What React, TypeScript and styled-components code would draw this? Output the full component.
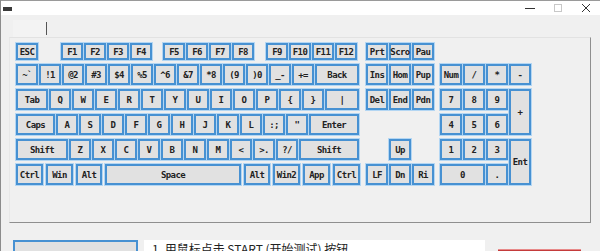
import React from "react";
import styled, { createGlobalStyle } from "styled-components";

const GlobalStyle = createGlobalStyle`
  html, body {
    margin: 0;
    padding: 0;
    background: #f0f0f0;
  }
  body {
    font-family: "Noto Sans CJK SC", "Noto Sans", sans-serif;
    overflow: hidden;
  }
`;

const Window = styled.div`
  width: 600px;
  height: 251px;
  overflow: hidden;
  box-sizing: border-box;
  background: #f0f0f0;
  border-left: 1px solid #8c8c8c;
  display: flex;
  flex-direction: column;
`;

const TitleBar = styled.div`
  height: 15px;
  flex: none;
  background: #ffffff;
  border-top: 1px solid #9a9a9a;
  box-sizing: border-box;
  display: flex;
  align-items: center;
`;

const AppIcon = styled.div`
  width: 9px;
  height: 4px;
  margin-left: 2px;
  margin-top: 2px;
  background: #3a3a3a;
`;

const Controls = styled.div`
  margin-left: auto;
  display: flex;
`;

const CtrlButton = styled.div<{ $dim?: boolean }>`
  width: 28px;
  height: 14px;
  display: flex;
  align-items: center;
  justify-content: center;
  color: ${(p) => (p.$dim ? "#c8c8c8" : "#333")};
`;

const TopStrip = styled.div`
  height: 22px;
  flex: none;
  display: flex;
  align-items: flex-start;
`;

const FieldBox = styled.div`
  margin-left: 12px;
  margin-top: 5px;
  width: 33px;
  height: 17px;
  background: #f3f3f3;
`;

const Caret = styled.div`
  width: 1px;
  height: 13px;
  margin-top: 7px;
  background: #555;
`;

const Panel = styled.div`
  margin-left: 8px;
  width: 582px;
  height: 186px;
  flex: none;
  box-sizing: border-box;
  border-top: 1px solid #e2e2e2;
  border-left: 1px solid #e8e8e8;
  border-right: 1px solid #8f8f8f;
  border-bottom: 1px solid #8f8f8f;
  padding: 5px 0 0 6px;
  display: flex;
  align-items: flex-start;
`;

const Block = styled.div<{ $gapLeft?: number }>`
  display: flex;
  flex-direction: column;
  gap: 4px;
  margin-left: ${(p) => p.$gapLeft ?? 0}px;
`;

const Row = styled.div<{ $gap?: number }>`
  display: flex;
  gap: ${(p) => p.$gap ?? 1}px;
`;

const Key = styled.div<{ $w?: number; $h?: number }>`
  width: ${(p) => p.$w ?? 22}px;
  height: ${(p) => p.$h ?? 21}px;
  box-sizing: border-box;
  flex: none;
  background: #e1e1e1;
  border: 2px solid #4791d2;
  box-shadow: 0 0 0 1px #b3d6f3;
  display: flex;
  align-items: center;
  justify-content: center;
  font-family: "DejaVu Sans Mono", "Liberation Mono", monospace;
  font-weight: bold;
  font-size: 9px;
  letter-spacing: -0.6px;
  color: #222;
  white-space: pre;
`;

const Blank = styled.div<{ $w?: number; $h?: number }>`
  width: ${(p) => p.$w ?? 22}px;
  height: ${(p) => p.$h ?? 21}px;
  flex: none;
`;

const NumPad = styled.div`
  margin-left: 6px;
  margin-top: 21px;
  display: grid;
  grid-template-columns: repeat(4, 22px);
  grid-template-rows: repeat(5, 21px);
  column-gap: 1px;
  row-gap: 4px;
`;

const PadKey = styled(Key)<{ $col?: string; $row?: string }>`
  width: auto;
  height: auto;
  grid-column: ${(p) => p.$col ?? "auto"};
  grid-row: ${(p) => p.$row ?? "auto"};
`;

const Bottom = styled.div`
  margin-top: 17px;
  display: flex;
  align-items: flex-start;
`;

const StatusBox = styled.div`
  margin-left: 12px;
  width: 125px;
  height: 24px;
  box-sizing: border-box;
  background: #e1e1e1;
  border: 2px solid #4791d2;
`;

const Instructions = styled.div`
  margin-left: 6px;
  width: 341px;
  height: 24px;
  background: #ffffff;
  box-sizing: border-box;
  padding: 1px 0 0 8px;
  font-size: 12px;
  line-height: 16px;
  color: #222;
  white-space: nowrap;
`;

const StartButton = styled.div`
  margin-left: 13px;
  margin-top: 9px;
  width: 83px;
  height: 20px;
  box-sizing: border-box;
  background: #c43b3b;
  border-top: 1px solid #e88a8a;
`;

const row2 = ["~`", "!1", "@2", "#3", "$4", "%5", "^6", "&7", "*8", "(9", ")0", "_-", "+="];
const row3 = ["Q", "W", "E", "R", "T", "Y", "U", "I", "O", "P", "{", "}"];
const row4 = ["A", "S", "D", "F", "G", "H", "J", "K", "L", ":;", "\""];
const row5 = ["Z", "X", "C", "V", "B", "N", "M", "<", ">.", "?/"];

const App: React.FC = () => {
  return (
    <>
      <GlobalStyle />
      <Window>
        <TitleBar>
          <AppIcon />
          <Controls>
            <CtrlButton>
              <svg width="10" height="10" viewBox="0 0 10 10">
                <line x1="0" y1="5.5" x2="10" y2="5.5" stroke="#333" strokeWidth="1" />
              </svg>
            </CtrlButton>
            <CtrlButton $dim>
              <svg width="10" height="10" viewBox="0 0 10 10">
                <rect x="1.5" y="1.5" width="7" height="7" fill="none" stroke="#c8c8c8" strokeWidth="1" />
              </svg>
            </CtrlButton>
            <CtrlButton>
              <svg width="10" height="10" viewBox="0 0 10 10">
                <path d="M1 1 L9 9 M9 1 L1 9" stroke="#333" strokeWidth="1" />
              </svg>
            </CtrlButton>
          </Controls>
        </TitleBar>

        <TopStrip>
          <FieldBox />
          <Caret />
        </TopStrip>

        <Panel>
          <Block>
            <Row>
              <Key $h={17}>ESC</Key>
              <Blank $w={21} $h={17} />
              {["F1", "F2", "F3", "F4"].map((k) => (
                <Key key={k} $h={17}>{k}</Key>
              ))}
              <Blank $w={9} $h={17} />
              {["F5", "F6", "F7", "F8"].map((k) => (
                <Key key={k} $h={17}>{k}</Key>
              ))}
              <Blank $w={10} $h={17} />
              {["F9", "F10", "F11", "F12"].map((k) => (
                <Key key={k} $h={17}>{k}</Key>
              ))}
            </Row>
            <Row>
              {row2.map((k) => (
                <Key key={k}>{k}</Key>
              ))}
              <Key $w={44}>Back</Key>
            </Row>
            <Row>
              <Key $w={32}>Tab</Key>
              {row3.map((k) => (
                <Key key={k}>{k}</Key>
              ))}
              <Key $w={34}>|</Key>
            </Row>
            <Row>
              <Key $w={39}>Caps</Key>
              {row4.map((k) => (
                <Key key={k}>{k}</Key>
              ))}
              <Key $w={50}>Enter</Key>
            </Row>
            <Row>
              <Key $w={52}>Shift</Key>
              {row5.map((k) => (
                <Key key={k}>{k}</Key>
              ))}
              <Key $w={60}>Shift</Key>
            </Row>
            <Row $gap={3}>
              <Key $w={27}>Ctrl</Key>
              <Key $w={27}>Win</Key>
              <Key $w={26}>Alt</Key>
              <Key $w={136}>Space</Key>
              <Key $w={26}>Alt</Key>
              <Key $w={27}>Win2</Key>
              <Key $w={27}>App</Key>
              <Key $w={27}>Ctrl</Key>
            </Row>
          </Block>

          <Block $gapLeft={6}>
            <Row>
              <Key $h={17}>Prt</Key>
              <Key $h={17}>Scro</Key>
              <Key $h={17}>Pau</Key>
            </Row>
            <Row>
              <Key>Ins</Key>
              <Key>Hom</Key>
              <Key>Pup</Key>
            </Row>
            <Row>
              <Key>Del</Key>
              <Key>End</Key>
              <Key>Pdn</Key>
            </Row>
            <Row>
              <Blank />
            </Row>
            <Row>
              <Blank />
              <Key>Up</Key>
            </Row>
            <Row>
              <Key>LF</Key>
              <Key>Dn</Key>
              <Key>Ri</Key>
            </Row>
          </Block>

          <NumPad>
            <PadKey>Num</PadKey>
            <PadKey>/</PadKey>
            <PadKey>*</PadKey>
            <PadKey>-</PadKey>
            <PadKey>7</PadKey>
            <PadKey>8</PadKey>
            <PadKey>9</PadKey>
            <PadKey $row="span 2">+</PadKey>
            <PadKey>4</PadKey>
            <PadKey>5</PadKey>
            <PadKey>6</PadKey>
            <PadKey>1</PadKey>
            <PadKey>2</PadKey>
            <PadKey>3</PadKey>
            <PadKey $row="span 2">Ent</PadKey>
            <PadKey $col="span 2">0</PadKey>
            <PadKey>.</PadKey>
          </NumPad>
        </Panel>

        <Bottom>
          <StatusBox />
          <Instructions>1. 用鼠标点击 START (开始测试) 按钮</Instructions>
          <StartButton />
        </Bottom>
      </Window>
    </>
  );
};

export default App;
